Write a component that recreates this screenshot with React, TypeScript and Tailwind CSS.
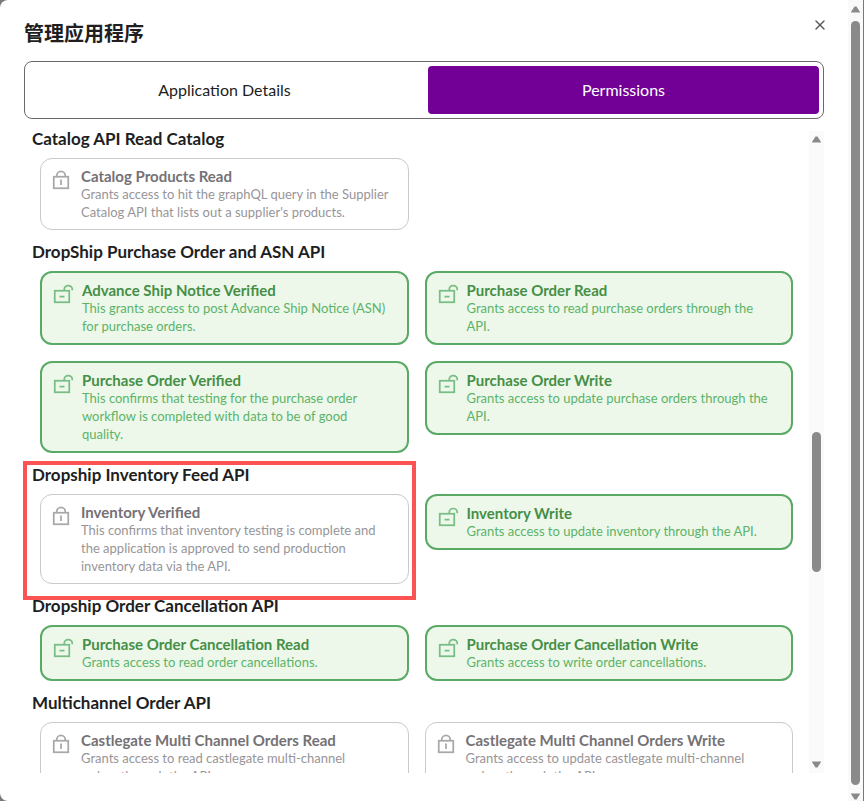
import { X } from "lucide-react";

type Permission = {
    name: string;
    description: string;
    granted?: boolean;
};

type PermissionGroup = {
    title: string;
    highlighted?: boolean;
    permissions: Permission[];
};

const groups: PermissionGroup[] = [
    {
        title: "Catalog API Read Catalog",
        permissions: [
            {
                name: "Catalog Products Read",
                description:
                    "Grants access to hit the graphQL query in the Supplier\nCatalog API that lists out a supplier's products.",
            },
        ],
    },
    {
        title: "DropShip Purchase Order and ASN API",
        permissions: [
            {
                name: "Advance Ship Notice Verified",
                description: "This grants access to post Advance Ship Notice (ASN)\nfor purchase orders.",
                granted: true,
            },
            {
                name: "Purchase Order Read",
                description: "Grants access to read purchase orders through the\nAPI.",
                granted: true,
            },
            {
                name: "Purchase Order Verified",
                description:
                    "This confirms that testing for the purchase order\nworkflow is completed with data to be of good\nquality.",
                granted: true,
            },
            {
                name: "Purchase Order Write",
                description: "Grants access to update purchase orders through the\nAPI.",
                granted: true,
            },
        ],
    },
    {
        title: "Dropship Inventory Feed API",
        highlighted: true,
        permissions: [
            {
                name: "Inventory Verified",
                description:
                    "This confirms that inventory testing is complete and\nthe application is approved to send production\ninventory data via the API.",
            },
            {
                name: "Inventory Write",
                description: "Grants access to update inventory through the API.",
                granted: true,
            },
        ],
    },
    {
        title: "Dropship Order Cancellation API",
        permissions: [
            {
                name: "Purchase Order Cancellation Read",
                description: "Grants access to read order cancellations.",
                granted: true,
            },
            {
                name: "Purchase Order Cancellation Write",
                description: "Grants access to write order cancellations.",
                granted: true,
            },
        ],
    },
    {
        title: "Multichannel Order API",
        permissions: [
            {
                name: "Castlegate Multi Channel Orders Read",
                description: "Grants access to read castlegate multi-channel\norders through the API.",
            },
            {
                name: "Castlegate Multi Channel Orders Write",
                description: "Grants access to update castlegate multi-channel\norders through the API.",
            },
        ],
    },
];

function LockedIcon() {
    return (
        <svg viewBox="0 0 24 24" className="size-6 shrink-0 text-[#aaa7aa]" fill="none" stroke="currentColor" strokeWidth="1.75" aria-hidden="true">
            <rect x="4.75" y="9.75" width="14.5" height="11.5" />
            <path d="M7.75 9.75V8.5a4.25 4.25 0 0 1 8.5 0v1.25M12 12.5v5.5" />
        </svg>
    );
}

function UnlockedIcon() {
    return (
        <svg viewBox="0 0 24 24" className="size-6 shrink-0 text-[#78bd83]" fill="none" stroke="currentColor" strokeWidth="1.75" aria-hidden="true">
            <rect x="4.75" y="9.75" width="14.5" height="11.5" />
            <path d="M14.25 9.75V8.5a4 4 0 0 1 8 0v.75M9.5 15.5h5" />
        </svg>
    );
}

function PermissionCard({ name, description, granted }: Permission) {
    return (
        <li
            className={
                granted
                    ? "flex gap-2 rounded-xl border-2 border-[#5aaa66] bg-[#edf8eb] p-2"
                    : "flex gap-2 rounded-xl border border-[#cbc9cb] p-2"
            }
        >
            {granted ? <UnlockedIcon /> : <LockedIcon />}
            <div className="min-w-0 leading-[18px]">
                <h3 className={granted ? "text-[15px] leading-[18px] font-bold text-[#458f46]" : "text-[15px] leading-[18px] font-bold text-[#757175]"}>
                    {name}
                </h3>
                <p className={granted ? "text-[13px] leading-[18px] whitespace-pre-line text-[#5cb368]" : "text-[13px] leading-[18px] whitespace-pre-line text-[#989598]"}>
                    {description}
                </p>
            </div>
        </li>
    );
}

function Scrollbar({ className, children }: { className: string; children: React.ReactNode }) {
    return (
        <div className={`flex shrink-0 flex-col items-center bg-[#fafafa] ${className}`} aria-hidden="true">
            <svg viewBox="0 0 9 7" className="h-[7px] w-[9px] shrink-0" fill="#8a8a8a">
                <path d="M3.5.5h2L9 6v.5H0V6z" />
            </svg>
            <div className="flex w-[9px] grow flex-col py-2">{children}</div>
            <svg viewBox="0 0 9 7" className="h-[7px] w-[9px] shrink-0" fill="#8a8a8a">
                <path d="M3.5 6.5h2L9 1V.5H0V1z" />
            </svg>
        </div>
    );
}

export default function App() {
    return (
        <div className="h-screen bg-[#7b787b] font-[Lato,'Noto_Sans_CJK_SC',sans-serif] text-[#211e22]">
            <div className="flex h-full rounded-l-lg border-r border-[#7b787b] bg-white">
                <main className="flex min-w-0 grow flex-col px-6">
                    <header className="flex items-start justify-between pt-[17px]">
                        <h1 className="pt-[2px] text-xl leading-7 font-bold">管理应用程序</h1>
                        <button type="button" aria-label="Close" className="-mr-1 text-[#5b585b]">
                            <X className="size-4" strokeWidth={2} />
                        </button>
                    </header>

                    <div role="tablist" className="mt-[14px] flex shrink-0 gap-2 rounded-lg border border-[#6b686b] p-1">
                        <button type="button" role="tab" aria-selected="false" className="h-12 flex-1 text-base">
                            Application Details
                        </button>
                        <button type="button" role="tab" aria-selected="true" className="h-12 flex-1 rounded bg-[#720096] text-base text-white">
                            Permissions
                        </button>
                    </div>

                    <div className="flex min-h-0 grow pb-7">
                        <div className="-ml-1 min-w-0 grow overflow-hidden pt-[6px] pr-2 pl-3">
                            {groups.map((group) => (
                                <section key={group.title} className="relative">
                                    <h2 className="pt-[2px] text-[17px] leading-[23px] font-bold">{group.title}</h2>
                                    <ul className="grid grid-cols-2 items-start gap-4 p-2">
                                        {group.permissions.map((permission) => (
                                            <PermissionCard key={permission.name} {...permission} />
                                        ))}
                                    </ul>
                                    {group.highlighted && (
                                        <div className="pointer-events-none absolute top-0 -bottom-2 -left-[9px] z-10 w-[393px] border-4 border-[#fc5353]" />
                                    )}
                                </section>
                            ))}
                        </div>
                        <Scrollbar className="mt-3 w-[15px] py-[5px]">
                            <div className="grow-[284]" />
                            <div className="grow-[141] rounded-full bg-[#8a8a8a]" />
                            <div className="grow-[183]" />
                        </Scrollbar>
                    </div>
                </main>
                <Scrollbar className="w-[15px] pt-[6px] pb-[1px]">
                    <div className="grow rounded-full bg-[#8a8a8a]" />
                </Scrollbar>
            </div>
        </div>
    );
}
